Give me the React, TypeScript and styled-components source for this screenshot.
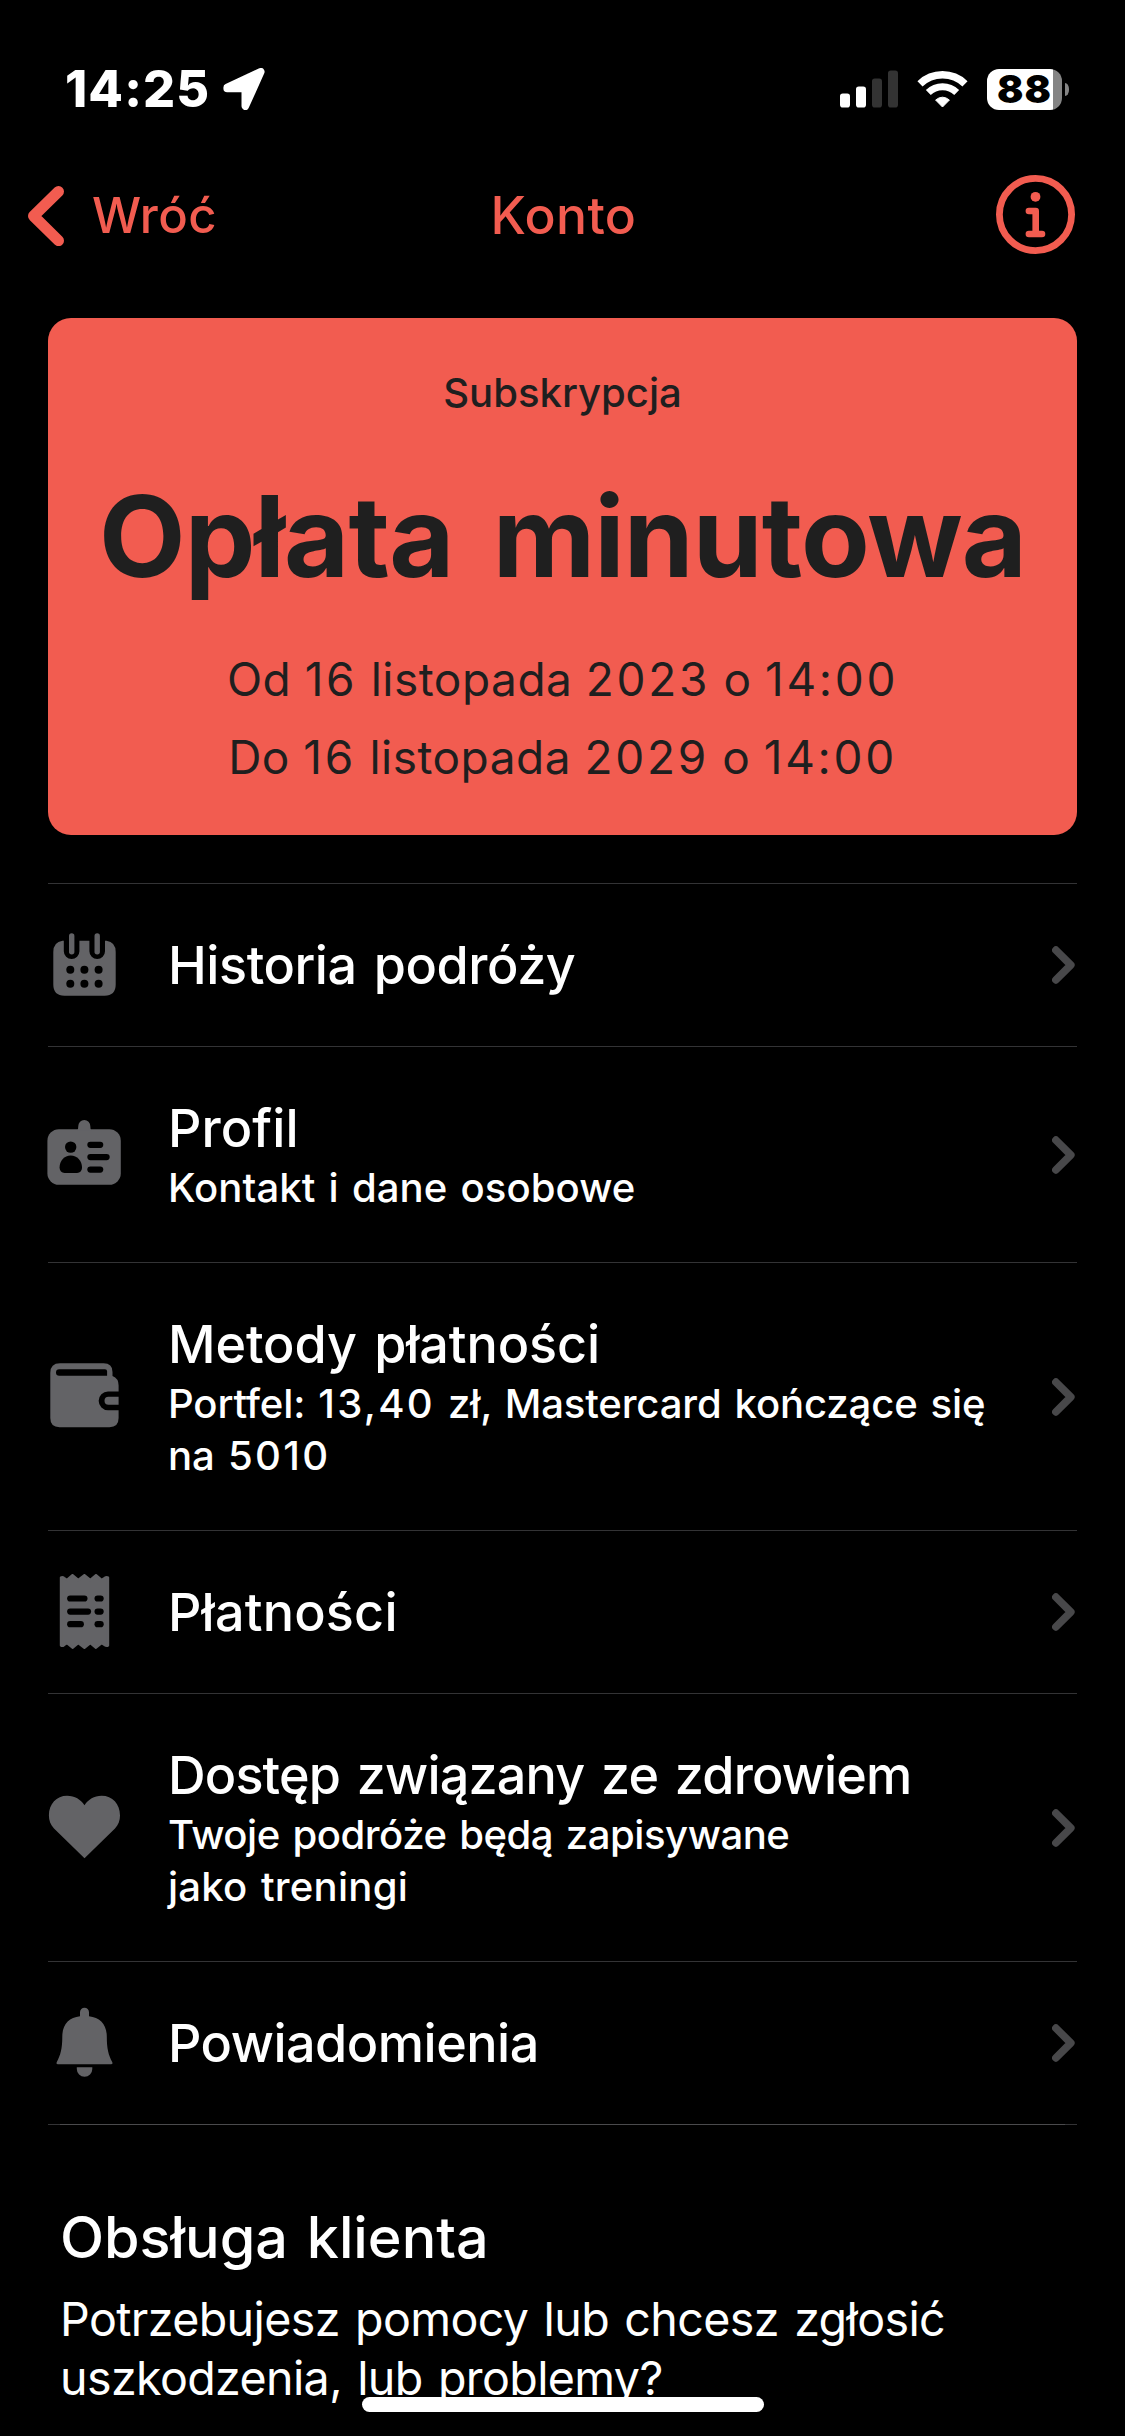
import React from 'react';
import styled, { createGlobalStyle } from 'styled-components';

const coral = '#f25c50';
const ink = '#1f1f1f';
const iconGrey = '#636366';

const GlobalStyle = createGlobalStyle`
  *, *::before, *::after { box-sizing: border-box; }
  html, body { margin: 0; background: #000; }
  body { font-family: Inter, "Liberation Sans", sans-serif; color: #fff; }
`;

const Screen = styled.main`
  position: relative;
  width: 1125px;
  height: 2436px;
  overflow: hidden;
  background: #000;
`;

/* Status bar */
const StatusBar = styled.header`
  height: 178px;
  padding: 0 56px 0 65px;
  display: flex;
  align-items: center;
  justify-content: space-between;
`;
const StatusGroup = styled.div<{ $gap?: number }>`
  display: flex;
  align-items: center;
  gap: ${(p) => p.$gap ?? 0}px;
`;
const Clock = styled.time`
  width: 158px;
  font-size: 50.4px;
  line-height: 60px;
  font-weight: 800;
  letter-spacing: 1.1px;
  white-space: nowrap;
`;
const Battery = styled.div`
  display: flex;
  align-items: center;
  gap: 3px;
`;
const BatteryBody = styled.div`
  width: 75px;
  height: 41px;
  padding-left: 10px;
  border-radius: 12px;
  background: linear-gradient(90deg, #fff 66px, #848484 66px);
  color: #000;
  font-size: 39px;
  line-height: 40px;
  font-weight: 900;
  letter-spacing: 1px;
`;
const BatteryTip = styled.div`
  width: 4px;
  height: 13px;
  border-radius: 0 4px 4px 0 / 0 6px 6px 0;
  background: #848484;
`;

/* Navigation */
const NavBar = styled.nav`
  height: 76px;
  padding: 0 28px;
  display: grid;
  grid-template-columns: 1fr auto 1fr;
  align-items: center;
  color: ${coral};
  font-weight: 500;
  line-height: 60px;
`;
const BackLink = styled.a`
  display: flex;
  align-items: center;
  gap: 28px;
  font-size: 49px;
  letter-spacing: 0.37px;
`;
const NavTitle = styled.h1`
  margin: -2px 0 0;
  padding-left: 2px;
  font-size: 51.6px;
  font-weight: 500;
  letter-spacing: 0.4px;
`;
const InfoButton = styled.span`
  justify-self: end;
  display: flex;
  margin: -3px 22px 0 0;
`;

/* Subscription card */
const Card = styled.section`
  height: 517px;
  margin: 64px 48px 48px;
  padding-top: 49px;
  border-radius: 23px;
  background: ${coral};
  color: ${ink};
  text-align: center;
  white-space: nowrap;
`;
const CardLabel = styled.div`
  font-size: 40.1px;
  line-height: 52px;
  font-weight: 500;
`;
const CardTitle = styled.h2`
  margin: 49px 0 36px;
  font-size: 112.3px;
  line-height: 136px;
  font-weight: 700;
  letter-spacing: -0.9px;
  word-spacing: 0.12em;
`;
const CardDate = styled.div`
  font-size: 46px;
  line-height: 78px;
  letter-spacing: 0.5px;
`;
const Digits = styled.span`
  letter-spacing: 0.058em;
`;

/* Menu */
const Menu = styled.section`
  margin: 0 48px;
`;
const Divider = styled.div<{ $strong?: boolean }>`
  height: 1px;
  padding: 0 12px;
  background: #333335;

  &::after {
    content: '';
    display: ${(p) => (p.$strong ? 'block' : 'none')};
    height: 1px;
    background: #4a4a4c;
  }
`;
const Row = styled.div<{ $detailed: boolean }>`
  display: flex;
  align-items: center;
  padding: 50px 2px ${(p) => (p.$detailed ? 49 : 50)}px 0;
`;
const RowIcon = styled.svg`
  flex: none;
  width: 76px;
  height: 76px;
  margin: -7px 45px -7px -1px;
  fill: ${iconGrey};
`;
const RowText = styled.div`
  flex: 1;
  padding-top: 1px;
  margin-bottom: -1px;
  white-space: nowrap;
`;
const RowTitle = styled.h3<{ $ls: number }>`
  margin: 0;
  font-size: 52.1px;
  line-height: 62px;
  font-weight: 500;
  letter-spacing: ${(p) => p.$ls}px;
  word-spacing: 0.07em;
`;
const RowDetail = styled.p`
  margin: 2px 0 0;
  font-size: 40.1px;
  line-height: 52px;
  font-weight: 500;
  word-spacing: 0.06em;
`;
const DetailLine = styled.span<{ $ls: number }>`
  display: block;
  letter-spacing: ${(p) => p.$ls}px;
`;

/* Support */
const Support = styled.section`
  padding: 77px 60px 0;
  white-space: nowrap;
`;
const SupportTitle = styled.h2`
  margin: 0 0 18px;
  font-size: 57.5px;
  line-height: 70px;
  font-weight: 500;
  word-spacing: 0.06em;
`;
const SupportText = styled.p`
  margin: 0;
  font-size: 46.6px;
  line-height: 59px;
  letter-spacing: -0.63px;
  word-spacing: 0.06em;
  white-space: pre-line;
`;
const HomeIndicator = styled.div`
  position: absolute;
  left: 362px;
  top: 2397px;
  width: 402px;
  height: 15px;
  border-radius: 8px;
  background: #fff;
`;

const LocationArrow = () => (
  <svg width="42" height="42" viewBox="0 0 42 42">
    <path
      d="M4.200 19.400 37.800 3.800 22.300 38.200V20.400H4.200Z"
      fill="#fff"
      stroke="#fff"
      strokeWidth="7.600"
      strokeLinejoin="round"
    />
  </svg>
);

const Signal = () => (
  <svg width="58" height="38" viewBox="0 0 58 38">
    <rect x="0" y="23.5" width="10" height="14" rx="2.8" fill="#fff" />
    <rect x="16" y="16.5" width="10" height="21" rx="2.8" fill="#fff" />
    <rect x="32" y="8.5" width="10" height="29" rx="2.8" fill="#333" />
    <rect x="48" y="0.5" width="10" height="37" rx="2.8" fill="#333" />
  </svg>
);

const Wifi = () => (
  <svg width="51" height="38" viewBox="0 0 51 38" fill="none" stroke="#fff">
    <path d="M3 13.8A32.5 32.5 0 0 1 48 13.8" strokeWidth="7.4" />
    <path d="M11.3 22.6A20.3 20.3 0 0 1 39.7 22.6" strokeWidth="7" />
    <path d="M18.6 30Q25.5 24.4 32.4 30L25.5 37Z" fill="#fff" strokeWidth="1" strokeLinejoin="round" />
  </svg>
);

const BackChevron = () => (
  <svg width="36" height="60" viewBox="0 0 36 60">
    <path d="M30.5 5.5 5.5 30 30.5 54.7" fill="none" stroke={coral} strokeWidth="11" strokeLinecap="round" strokeLinejoin="round" />
  </svg>
);

const InfoIcon = () => (
  <svg width="79" height="79" viewBox="0 0 79 79" fill="none" stroke={coral}>
    <circle cx="39.5" cy="39.5" r="36.1" strokeWidth="6.8" />
    <circle cx="39.5" cy="21.8" r="4.9" fill={coral} stroke="none" />
    <path d="M32.9 36H39.7V59M32.9 59H46" strokeWidth="6.6" strokeLinecap="round" strokeLinejoin="round" />
  </svg>
);

const RowChevron = () => (
  <svg width="23" height="38" viewBox="0 0 23 38">
    <path d="M3.9 4.1 18.8 19 3.9 33.9" fill="none" stroke="#48484a" strokeWidth="7.6" strokeLinecap="round" strokeLinejoin="round" />
  </svg>
);

const CalendarIcon = () => (
  <RowIcon viewBox="0 0 76 76">
    <path d="M15.5 13.7h1.3V24.2a7.8 7.8 0 0 0 15.6 0V13.7h10V24.2a7.8 7.8 0 0 0 15.6 0V13.7h1.5Q68.7 15 68.7 25V57.5Q68.7 68.7 57.5 68.7H17.5Q6.3 68.7 6.3 57.5V25Q6.3 15 15.5 13.7Z" />
    <rect x="22" y="6.3" width="5.4" height="21.2" rx="2.7" />
    <rect x="47.5" y="6.3" width="5.4" height="21.2" rx="2.7" />
    <g fill="#000">
      {[42.7, 56.8].map((y) => [23.3, 37.4, 51.6].map((x) => <circle key={`${x}-${y}`} cx={x} cy={y} r="4" />))}
    </g>
  </RowIcon>
);

const ProfileIcon = () => (
  <RowIcon viewBox="0 0 76 76">
    <rect x="0.4" y="12.2" width="73.4" height="55.6" rx="11.5" />
    <path d="M30.2 13.5Q31.3 12.5 31.3 9a6 6 0 0 1 12 0Q43.3 12.5 44.4 13.5Z" />
    <g fill="#000">
      <circle cx="23.7" cy="30.1" r="5.7" />
      <path d="M23.7 38.5c6.4 0 11.3 5.5 11.3 11.8 0 3.6-2 5.6-5 5.6H17.6c-3 0-5-2-5-5.6 0-6.3 4.7-11.8 11.1-11.8Z" />
      <rect x="40.3" y="24.7" width="16" height="6.2" rx="3.1" />
      <rect x="40.3" y="37" width="22.4" height="6.2" rx="3.1" />
      <rect x="40.3" y="49.5" width="16" height="6.2" rx="3.1" />
    </g>
  </RowIcon>
);

const WalletIcon = () => (
  <RowIcon viewBox="0 0 76 76">
    <path d="M13 4.3H56.5Q65.5 4.3 65.5 13V17Q71.6 19.3 71.6 26.5V59Q71.6 68.2 62.5 68.2H12.5Q3.3 68.2 3.3 59V14Q3.3 4.3 13 4.3Z" />
    <g fill="#000">
      <path d="M12.2 10.3H58Q60.1 10.3 60.1 12.3V16.7H12.2a3.2 3.2 0 0 1 0-6.4Z" />
      <path d="M76 32.5H61a9.3 9.3 0 0 0 0 18.7H76V45.8H61.5a4 4 0 0 1 0-8H76Z" />
    </g>
  </RowIcon>
);

const ReceiptIcon = () => (
  <RowIcon viewBox="0 0 76 76">
    <path
      d="M14 3.5Q15.5 2.6 17 4L20 6 25.5 1.2 31.2 6 37.4 1.2 43.3 6 49 1.2 54.6 6 57.6 4Q59.5 2.6 61 3.5V71.5Q59.5 72.4 57.6 71L54.6 69 49 73.7 43.3 69 37.4 73.7 31.2 69 25.5 73.7 20 69 17 71Q15.5 72.4 14 71.5Z"
      stroke={iconGrey}
      strokeWidth="2.4"
      strokeLinejoin="round"
    />
    <g fill="#000">
      <rect x="20.1" y="21.4" width="20.4" height="6.2" rx="3.1" />
      <rect x="47.5" y="21.4" width="9.2" height="6.2" rx="3.1" />
      <rect x="20.1" y="34.5" width="24" height="6.2" rx="3.1" />
      <rect x="47.5" y="34.5" width="9.2" height="6.2" rx="3.1" />
      <rect x="20.1" y="47.1" width="16.8" height="6.2" rx="3.1" />
      <rect x="47.5" y="47.1" width="9.2" height="6.2" rx="3.1" />
    </g>
  </RowIcon>
);

const HeartIcon = () => (
  <RowIcon viewBox="0 0 76 76">
    <path d="M37.5 68.2 7 38.5C3.5 34.5 1.9 30.5 1.9 25.5 1.9 14 9.5 5.8 20.1 5.8 28 5.8 33.5 9.5 37.5 15.2 41.5 9.5 47 5.8 54.6 5.8 65.5 5.8 73 14 73 25.5 73 30.5 71.5 34.5 68 38.5Z" />
  </RowIcon>
);

const BellIcon = () => (
  <RowIcon viewBox="0 0 76 76">
    <path d="M33 11.3V7.3a4.5 4.5 0 0 1 9 0V11.3C53 12.5 59.8 19.5 59.8 31.5 59.8 44 61.5 50 65.2 57Q66.2 59.2 64 59.2H11Q8.8 59.2 9.8 57C13.5 50 15.3 44 15.3 31.5 15.3 19.5 22 12.5 33 11.3Z" />
    <path d="M29.8 62.2H45.3V64a7.75 7.75 0 0 1-15.5 0Z" />
  </RowIcon>
);

/* Numbers are tracked wider than the words around them. */
const TrackedText = ({ children }: { children: string }) => (
  <>
    {children.split(/(\d[\d,:]*\d)/).map((part, i) => (i % 2 ? <Digits key={i}>{part}</Digits> : part))}
  </>
);

type Line = { text: string; spacing: number };
type Item = {
  title: string;
  titleSpacing: number;
  detail?: Line[];
  Icon: React.FC;
};

const items: Item[] = [
  { title: 'Historia podróży', titleSpacing: -0.44, Icon: CalendarIcon },
  {
    title: 'Profil',
    titleSpacing: 0.1,
    detail: [{ text: 'Kontakt i dane osobowe', spacing: 0.07 }],
    Icon: ProfileIcon,
  },
  {
    title: 'Metody płatności',
    titleSpacing: -0.1,
    detail: [
      { text: 'Portfel: 13,40 zł, Mastercard kończące się', spacing: -0.14 },
      { text: 'na 5010', spacing: 0 },
    ],
    Icon: WalletIcon,
  },
  { title: 'Płatności', titleSpacing: 0.2, Icon: ReceiptIcon },
  {
    title: 'Dostęp związany ze zdrowiem',
    titleSpacing: -0.84,
    detail: [
      { text: 'Twoje podróże będą zapisywane', spacing: -0.46 },
      { text: 'jako treningi', spacing: 0.25 },
    ],
    Icon: HeartIcon,
  },
  { title: 'Powiadomienia', titleSpacing: -0.5, Icon: BellIcon },
];

export default function App() {
  return (
    <>
      <GlobalStyle />
      <Screen>
        <StatusBar>
          <StatusGroup>
            <Clock>14:25</Clock>
            <LocationArrow />
          </StatusGroup>
          <StatusGroup $gap={19}>
            <Signal />
            <Wifi />
            <Battery>
              <BatteryBody>88</BatteryBody>
              <BatteryTip />
            </Battery>
          </StatusGroup>
        </StatusBar>
        <NavBar>
          <BackLink>
            <BackChevron />
            Wróć
          </BackLink>
          <NavTitle>Konto</NavTitle>
          <InfoButton>
            <InfoIcon />
          </InfoButton>
        </NavBar>
        <Card>
          <CardLabel>Subskrypcja</CardLabel>
          <CardTitle>Opłata minutowa</CardTitle>
          <CardDate>
            <TrackedText>Od 16 listopada 2023 o 14:00</TrackedText>
          </CardDate>
          <CardDate>
            <TrackedText>Do 16 listopada 2029 o 14:00</TrackedText>
          </CardDate>
        </Card>
        <Menu>
          <Divider />
          {items.map(({ title, titleSpacing, detail, Icon }, i) => (
            <React.Fragment key={title}>
              <Row $detailed={!!detail}>
                <Icon />
                <RowText>
                  <RowTitle $ls={titleSpacing}>{title}</RowTitle>
                  {detail && (
                    <RowDetail>
                      {detail.map(({ text, spacing }) => (
                        <DetailLine key={text} $ls={spacing}>
                          <TrackedText>{text}</TrackedText>
                        </DetailLine>
                      ))}
                    </RowDetail>
                  )}
                </RowText>
                <RowChevron />
              </Row>
              <Divider $strong={i === items.length - 1} />
            </React.Fragment>
          ))}
        </Menu>
        <Support>
          <SupportTitle>Obsługa klienta</SupportTitle>
          <SupportText>{'Potrzebujesz pomocy lub chcesz zgłosić\nuszkodzenia, lub problemy?'}</SupportText>
        </Support>
        <HomeIndicator />
      </Screen>
    </>
  );
}
